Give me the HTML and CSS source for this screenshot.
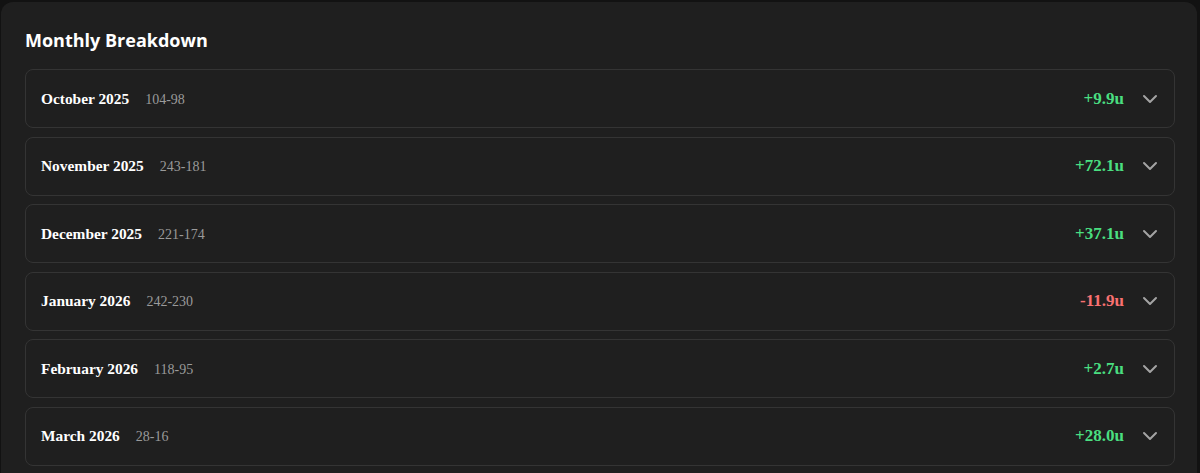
FILE: index.html
```html
<!DOCTYPE html>
<html lang="en">
<head>
<meta charset="utf-8">
<title>Monthly Breakdown</title>
<link rel="stylesheet" href="styles.css">
</head>
<body>
<section class="card">
  <h2 class="title">Monthly Breakdown</h2>
  <div class="list">
    <div class="row">
      <div class="left"><span class="month">October 2025</span><span class="record">104-98</span></div>
      <div class="right"><span class="value pos">+9.9u</span><svg class="chev" viewBox="0 0 24 24"><path d="M6 9l6 6 6-6"/></svg></div>
    </div>
    <div class="row">
      <div class="left"><span class="month">November 2025</span><span class="record">243-181</span></div>
      <div class="right"><span class="value pos">+72.1u</span><svg class="chev" viewBox="0 0 24 24"><path d="M6 9l6 6 6-6"/></svg></div>
    </div>
    <div class="row">
      <div class="left"><span class="month">December 2025</span><span class="record">221-174</span></div>
      <div class="right"><span class="value pos">+37.1u</span><svg class="chev" viewBox="0 0 24 24"><path d="M6 9l6 6 6-6"/></svg></div>
    </div>
    <div class="row">
      <div class="left"><span class="month">January 2026</span><span class="record">242-230</span></div>
      <div class="right"><span class="value neg">-11.9u</span><svg class="chev" viewBox="0 0 24 24"><path d="M6 9l6 6 6-6"/></svg></div>
    </div>
    <div class="row">
      <div class="left"><span class="month">February 2026</span><span class="record">118-95</span></div>
      <div class="right"><span class="value pos">+2.7u</span><svg class="chev" viewBox="0 0 24 24"><path d="M6 9l6 6 6-6"/></svg></div>
    </div>
    <div class="row">
      <div class="left"><span class="month">March 2026</span><span class="record">28-16</span></div>
      <div class="right"><span class="value pos">+28.0u</span><svg class="chev" viewBox="0 0 24 24"><path d="M6 9l6 6 6-6"/></svg></div>
    </div>
  </div>
</section>
</body>
</html>
```
FILE: styles.css
```css
html, body {
  margin: 0;
  padding: 0;
  background: #121212;
  height: 100%;
  overflow: hidden;
}
body {
  padding: 2px 3px 0 1px;
}
.card {
  background: #1f1f1f;
  border-radius: 12px;
  padding: 26px 22px 24px 24px;
  min-height: 600px;
}
.title {
  margin: 0 0 17px 0;
  font-family: "Open Sans", sans-serif;
  font-weight: 700;
  font-size: 18px;
  line-height: 24px;
  color: #ffffff;
}
.list {
  display: flex;
  flex-direction: column;
  gap: 8.5px;
}
.row {
  display: flex;
  align-items: center;
  justify-content: space-between;
  height: 57px;
  border: 1px solid #343434;
  border-radius: 8px;
  padding: 0 12px 0 15px;
  font-family: "Liberation Serif", "Times New Roman", serif;
}
.left {
  display: flex;
  align-items: baseline;
  gap: 16px;
}
.month {
  font-weight: 700;
  font-size: 15.4px;
  color: #ffffff;
}
.record {
  font-size: 14px;
  color: #9a9a9a;
}
.right {
  display: flex;
  align-items: center;
  gap: 14px;
}
.value {
  font-weight: 700;
  font-size: 17px;
}
.pos { color: #4ade80; }
.neg { color: #f87171; }
.chev {
  width: 24px;
  height: 24px;
  fill: none;
  stroke: #a3a3a3;
  stroke-width: 2;
  stroke-linecap: round;
  stroke-linejoin: round;
}
```
